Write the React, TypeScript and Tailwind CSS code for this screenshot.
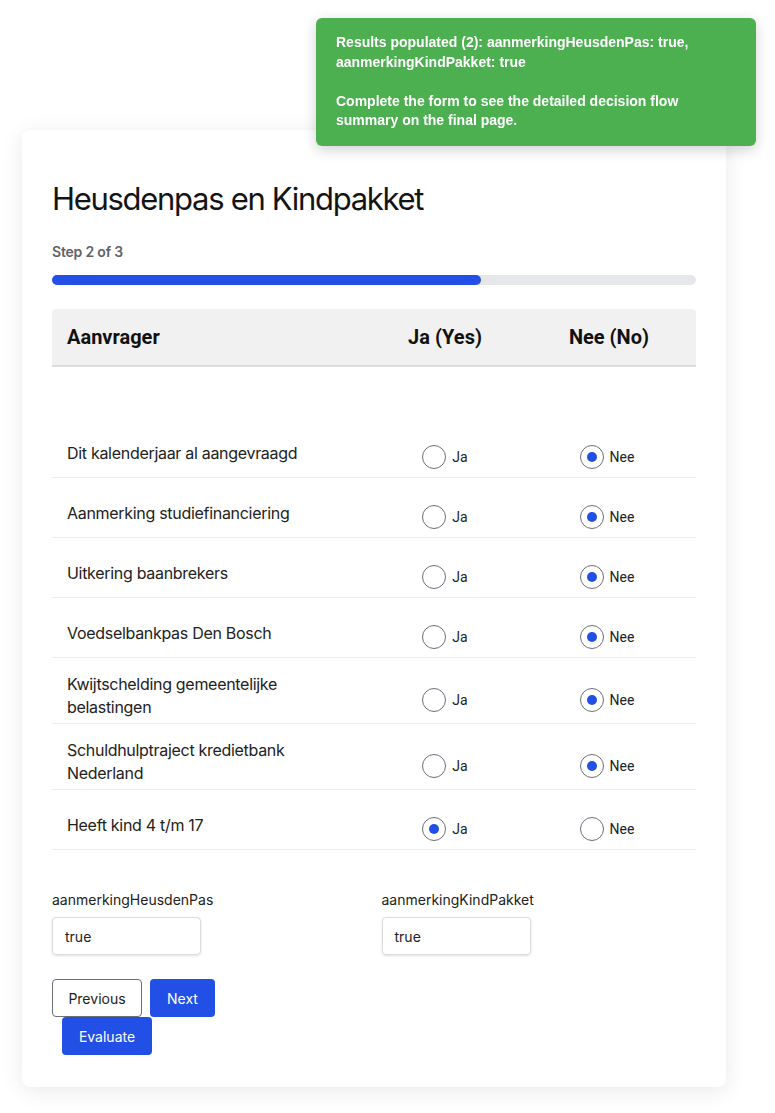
import React from "react";

type Row = { id: number; label: string; ja: boolean };

const rows: Row[] = [
  { id: 1, label: "Dit kalenderjaar al aangevraagd", ja: false },
  { id: 2, label: "Aanmerking studiefinanciering", ja: false },
  { id: 3, label: "Uitkering baanbrekers", ja: false },
  { id: 4, label: "Voedselbankpas Den Bosch", ja: false },
  { id: 5, label: "Kwijtschelding gemeentelijke belastingen", ja: false },
  { id: 6, label: "Schuldhulptraject kredietbank Nederland", ja: false },
  { id: 7, label: "Heeft kind 4 t/m 17", ja: true },
];

const Radio = ({ checked, label }: { checked: boolean; label: string }) => (
  <label className="flex h-[52px] items-start gap-[6px] pt-[24px]">
    <span className="flex h-[24px] w-[24px] items-center justify-center rounded-full border-[1.5px] border-[#6b6f78] bg-white">
      {checked && <span className="h-[10px] w-[10px] rounded-full bg-[#2250e6]" />}
    </span>
    <span className="font-['Roboto',sans-serif] text-[14px] leading-[24px] text-[#222]">{label}</span>
  </label>
);

const App = () => {
  return (
    <div className="relative min-h-[1113px] bg-white font-['Inter',sans-serif] text-[#1b1b1b]">
      {/* toast */}
      <div className="fixed top-[18px] right-[19px] z-10 w-[440px] rounded-[6px] bg-[#4caf50] px-5 py-[15px] font-['Liberation_Sans',Arial,sans-serif] text-[14px] font-bold leading-[19.5px] text-white shadow-[0_4px_14px_rgba(0,0,0,0.18)]">
        <p>Results populated (2): aanmerkingHeusdenPas: true, aanmerkingKindPakket: true</p>
        <br />
        <p>Complete the form to see the detailed decision flow summary on the final page.</p>
      </div>

      <div className="pt-[130px] pb-[27px] pl-[22px]">
        <div className="w-[704px] rounded-[8px] bg-white px-[30px] pt-[30px] pb-[32px] shadow-[0_4px_22px_rgba(0,0,0,0.09)]">
          <h1 className="mt-[20px] text-[31px] font-normal leading-[38px] tracking-[-1.3px] text-[#141414]">
            Heusdenpas en Kindpakket
          </h1>
          <p className="mt-[24px] text-[14px] font-semibold leading-[20px] tracking-[-0.2px] text-[#5f6368]">Step 2 of 3</p>
          <div className="mt-[13px] h-[10px] w-full rounded-full bg-[#e5e7eb]">
            <div className="h-full w-2/3 rounded-full bg-[#2250e6]" />
          </div>

          {/* table header */}
          <div className="mt-[24px] grid h-[58px] grid-cols-[317px_152px_176px] items-center rounded-t-[4px] border-b-2 border-[#dcdcdc] bg-[#f1f1f1] font-['Roboto',sans-serif] text-[20px] font-bold text-[#111]">
            <span className="pl-[15px]">Aanvrager</span>
            <span className="text-center">Ja (Yes)</span>
            <span className="text-center">Nee (No)</span>
          </div>

          <div className="mt-[51px]">
            {rows.map((row) => (
              <div
                key={row.id}
                className="grid grid-cols-[317px_152px_172px] items-center border-b border-[#ececec] pt-[3px] pb-[4px]"
              >
                <span className="max-w-[265px] pl-[15px] pt-[12px] text-[16px] leading-[23px] tracking-[-0.3px] text-[#222]">
                  {row.label}
                </span>
                <div className="flex justify-center">
                  <Radio checked={row.ja} label="Ja" />
                </div>
                <div className="flex justify-center">
                  <Radio checked={!row.ja} label="Nee" />
                </div>
              </div>
            ))}
          </div>

          {/* results */}
          <div className="mt-[40px] grid grid-cols-2 gap-x-[15px] text-[14px]">
            <div>
              <p className="leading-[20px] text-[#222]">aanmerkingHeusdenPas</p>
              <div className="mt-[7px] flex h-[38px] w-[149px] items-center rounded-[4px] border border-[#dcdcdc] px-[12px] text-[#222] shadow-sm">
                true
              </div>
            </div>
            <div>
              <p className="leading-[20px] text-[#222]">aanmerkingKindPakket</p>
              <div className="mt-[7px] flex h-[38px] w-[149px] items-center rounded-[4px] border border-[#dcdcdc] px-[12px] text-[#222] shadow-sm">
                true
              </div>
            </div>
          </div>

          <div className="mt-[24px] flex gap-[8px] text-[14px]">
            <button className="h-[38px] w-[90px] rounded-[4px] border border-[#6b6f78] bg-white text-[#222]">Previous</button>
            <button className="h-[38px] w-[65px] rounded-[4px] bg-[#2250e6] text-white">Next</button>
          </div>
          <div className="ml-[10px]">
            <button className="h-[38px] w-[90px] rounded-[4px] bg-[#2250e6] text-[14px] text-white">Evaluate</button>
          </div>
        </div>
      </div>
    </div>
  );
};

export default App;
